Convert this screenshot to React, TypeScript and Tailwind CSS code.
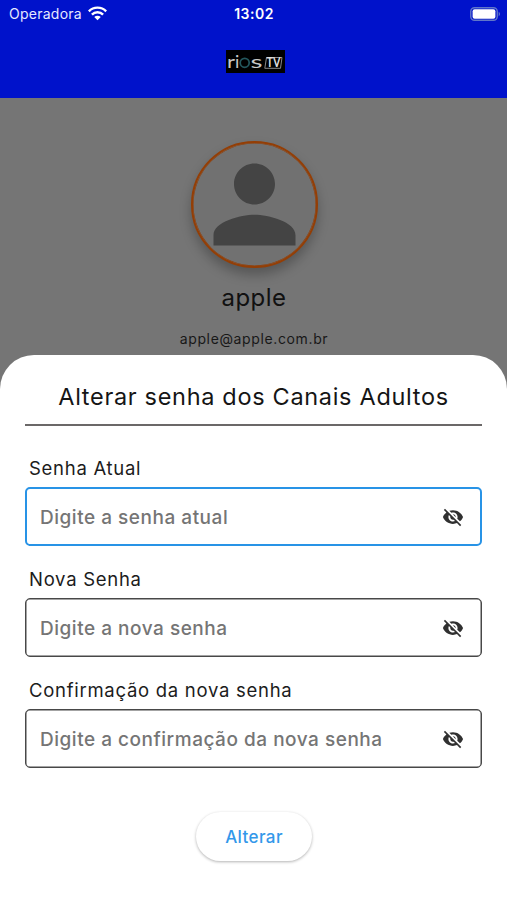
import { MdPerson, MdVisibilityOff } from 'react-icons/md'

const fields: { label: string; placeholder: string; focused?: boolean }[] = [
  { label: 'Senha Atual', placeholder: 'Digite a senha atual', focused: true },
  { label: 'Nova Senha', placeholder: 'Digite a nova senha' },
  { label: 'Confirmação da nova senha', placeholder: 'Digite a confirmação da nova senha' },
]

function StatusBar() {
  return (
    <div className="grid h-7 grid-cols-3 items-center pl-[9px] pr-[6px] text-white">
      <div className="flex items-center gap-[6px]">
        <span className="text-[14px] leading-none tracking-[0.25px] text-[#e6e9ff]">Operadora</span>
        <svg className="-mt-[2px]" width="19" height="15" viewBox="0 0 18 14" fill="none" stroke="currentColor" strokeWidth="2.3">
          <path d="M0.8 4.9C5.3 0.3 12.7 0.3 17.2 4.9" />
          <path d="M3.7 8C6.6 5 11.4 5 14.3 8" />
          <path d="M9 13.4L5.9 10.3C7.6 8.7 10.4 8.7 12.1 10.3Z" fill="currentColor" stroke="none" />
        </svg>
      </div>
      <span className="pr-[2px] text-center text-[14px] font-semibold leading-none tracking-[0.5px]">13:02</span>
      <svg className="-mt-px justify-self-end" width="31" height="14" viewBox="0 0 31 14">
        <rect x="0.75" y="0.75" width="26.5" height="12.5" rx="3.8" fill="none" stroke="#6076c9" strokeWidth="1.4" />
        <rect x="2.6" y="2.3" width="22.8" height="9.4" rx="2" fill="#fff" />
        <path d="M28.7 4.8C30.5 5.5 30.5 8.5 28.7 9.2Z" fill="#6076c9" />
      </svg>
    </div>
  )
}

function Logo() {
  return (
    <svg width="59" height="23" viewBox="0 0 59 23" fontFamily="Lato, sans-serif">
      <rect width="59" height="23" fill="#000" />
      <text x="1" y="18" fontSize="18" textLength="8" lengthAdjust="spacingAndGlyphs" fill="#c8c8c8">r</text>
      <text x="9" y="18" fontSize="18" fill="#c8c8c8">i</text>
      <circle cx="18.7" cy="12.8" r="4.5" fill="none" stroke="#23575d" strokeWidth="1.7" />
      <text x="24.5" y="18" fontSize="18" textLength="12" lengthAdjust="spacingAndGlyphs" fill="#c8c8c8">s</text>
      <path d="M40.5 7.5H56L54.5 18.3H38.8Z" fill="none" stroke="#999" strokeWidth="0.9" />
      <text x="40.5" y="17.3" fontSize="12.5" fontWeight="700" textLength="14" lengthAdjust="spacingAndGlyphs" fill="#ddd">TV</text>
    </svg>
  )
}

function PasswordField({ label, placeholder, focused }: { label: string; placeholder: string; focused?: boolean }) {
  return (
    <div className="h-[111px]">
      <label className="block h-[31px] pl-1 text-[18.5px] leading-6 tracking-[0.72px] text-[#1c1c1c]">{label}</label>
      <div
        className={
          focused
            ? 'flex h-[59px] items-center rounded-[5px] border-2 border-[#2893e6] pl-[13px] pr-4'
            : 'flex h-[59px] items-center rounded-[5px] border border-[#484848] pl-[14px] pr-[17px] shadow-[inset_0_0_0_0.5px_#484848]'
        }
      >
        <input
          className="min-w-0 flex-1 bg-transparent pt-[3px] text-[19px] font-medium tracking-[0.52px] outline-none placeholder:text-[#757575]"
          placeholder={placeholder}
        />
        <MdVisibilityOff className="shrink-0 text-[#303030]" size={22} />
      </div>
    </div>
  )
}

export default function App() {
  return (
    <div className="flex h-[900px] w-[507px] flex-col overflow-hidden bg-[#757575] font-[Inter,sans-serif]">
      <header className="h-[98px] shrink-0 bg-[#0012cb]">
        <StatusBar />
        <div className="mt-[22px] flex justify-center pl-[3px]">
          <Logo />
        </div>
      </header>

      <div className="flex h-[257px] shrink-0 flex-col items-center pt-[43px] pl-px">
        <div className="flex size-[127px] items-center justify-center rounded-full border-2 border-[#943e05] bg-[#717171] shadow-[inset_0_0_0_0.5px_#943e05,0_7px_12px_rgba(0,0,0,0.26)]">
          <MdPerson className="shrink-0 text-[#444]" size={123} />
        </div>
        <h1 className="mt-[14px] text-[24px] leading-8 tracking-[0.5px] text-[#111]">apple</h1>
        <p className="mt-[15px] text-[14px] leading-5 tracking-[0.63px] text-[#181818]">apple@apple.com.br</p>
      </div>

      <main className="relative flex-1">
        {/* dimmed backdrop stays visible behind the rounded corners */}
        <section className="h-full rounded-t-[34px] bg-white px-[25px] pt-[25px]">
          <h2 className="border-b-2 border-[#6b6868] pb-[10px] text-center text-[23.5px] leading-[34px] tracking-[0.68px] text-[#151515]">
            Alterar senha dos Canais Adultos
          </h2>
          <div className="mt-[30px]">
            {fields.map(field => (
              <PasswordField key={field.label} {...field} />
            ))}
          </div>
          <button className="mx-auto mt-[23px] block h-[49px] w-[116px] rounded-full bg-white pt-[2px] pl-px text-[17px] font-medium tracking-[0.4px] text-[#3398ea] shadow-[0_1px_3px_rgba(0,0,0,0.3)]">
            Alterar
          </button>
        </section>
      </main>
    </div>
  )
}
